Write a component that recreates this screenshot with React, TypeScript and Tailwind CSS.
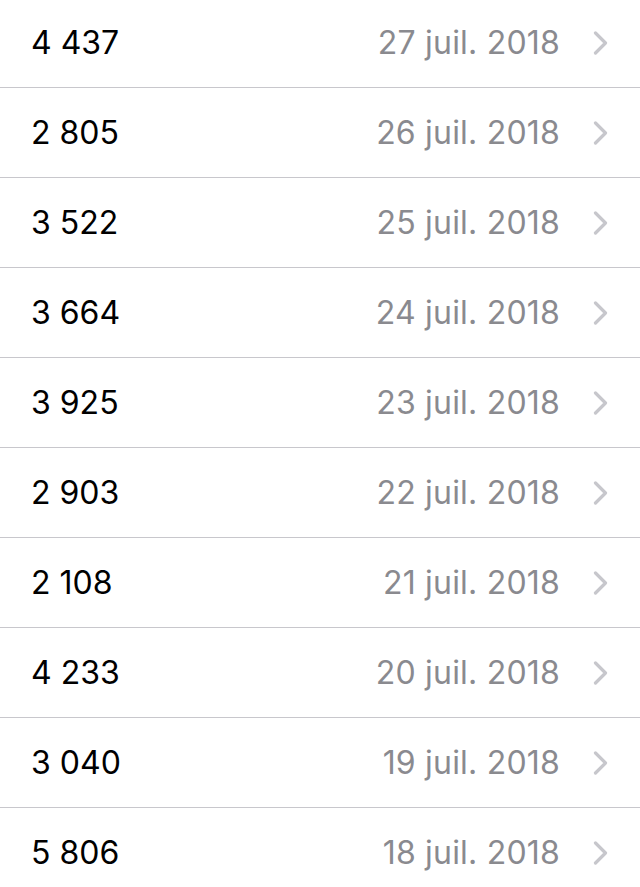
import React from 'react';

const rows = [
  { steps: '4 437', date: '27 juil. 2018' },
  { steps: '2 805', date: '26 juil. 2018' },
  { steps: '3 522', date: '25 juil. 2018' },
  { steps: '3 664', date: '24 juil. 2018' },
  { steps: '3 925', date: '23 juil. 2018' },
  { steps: '2 903', date: '22 juil. 2018' },
  { steps: '2 108', date: '21 juil. 2018' },
  { steps: '4 233', date: '20 juil. 2018' },
  { steps: '3 040', date: '19 juil. 2018' },
  { steps: '5 806', date: '18 juil. 2018' },
];

function Chevron() {
  return (
    <svg width="15" height="24" viewBox="0 0 15 24" fill="none" className="shrink-0">
      <path d="M2.5 2 L12.5 12 L2.5 22" stroke="#c7c7cc" strokeWidth="3.2" strokeLinecap="round" strokeLinejoin="round" />
    </svg>
  );
}

export default function App() {
  return (
    <div className="h-[887px] w-[640px] overflow-hidden bg-white" style={{ fontFamily: 'Inter, "Noto Sans", sans-serif' }}>
      <ul className="-mt-[2px]">
        {rows.map((r) => (
          <li key={r.date} className="h-[90px] border-b border-[#c8c7cc] flex items-center pl-[31px] pr-[32px]">
            <span className="flex-1 text-[32px] text-black">{r.steps}</span>
            <span className="text-[32px] tracking-[0.2px] text-[#8a8a8f] mr-[33px]">{r.date}</span>
            <Chevron />
          </li>
        ))}
      </ul>
    </div>
  );
}
